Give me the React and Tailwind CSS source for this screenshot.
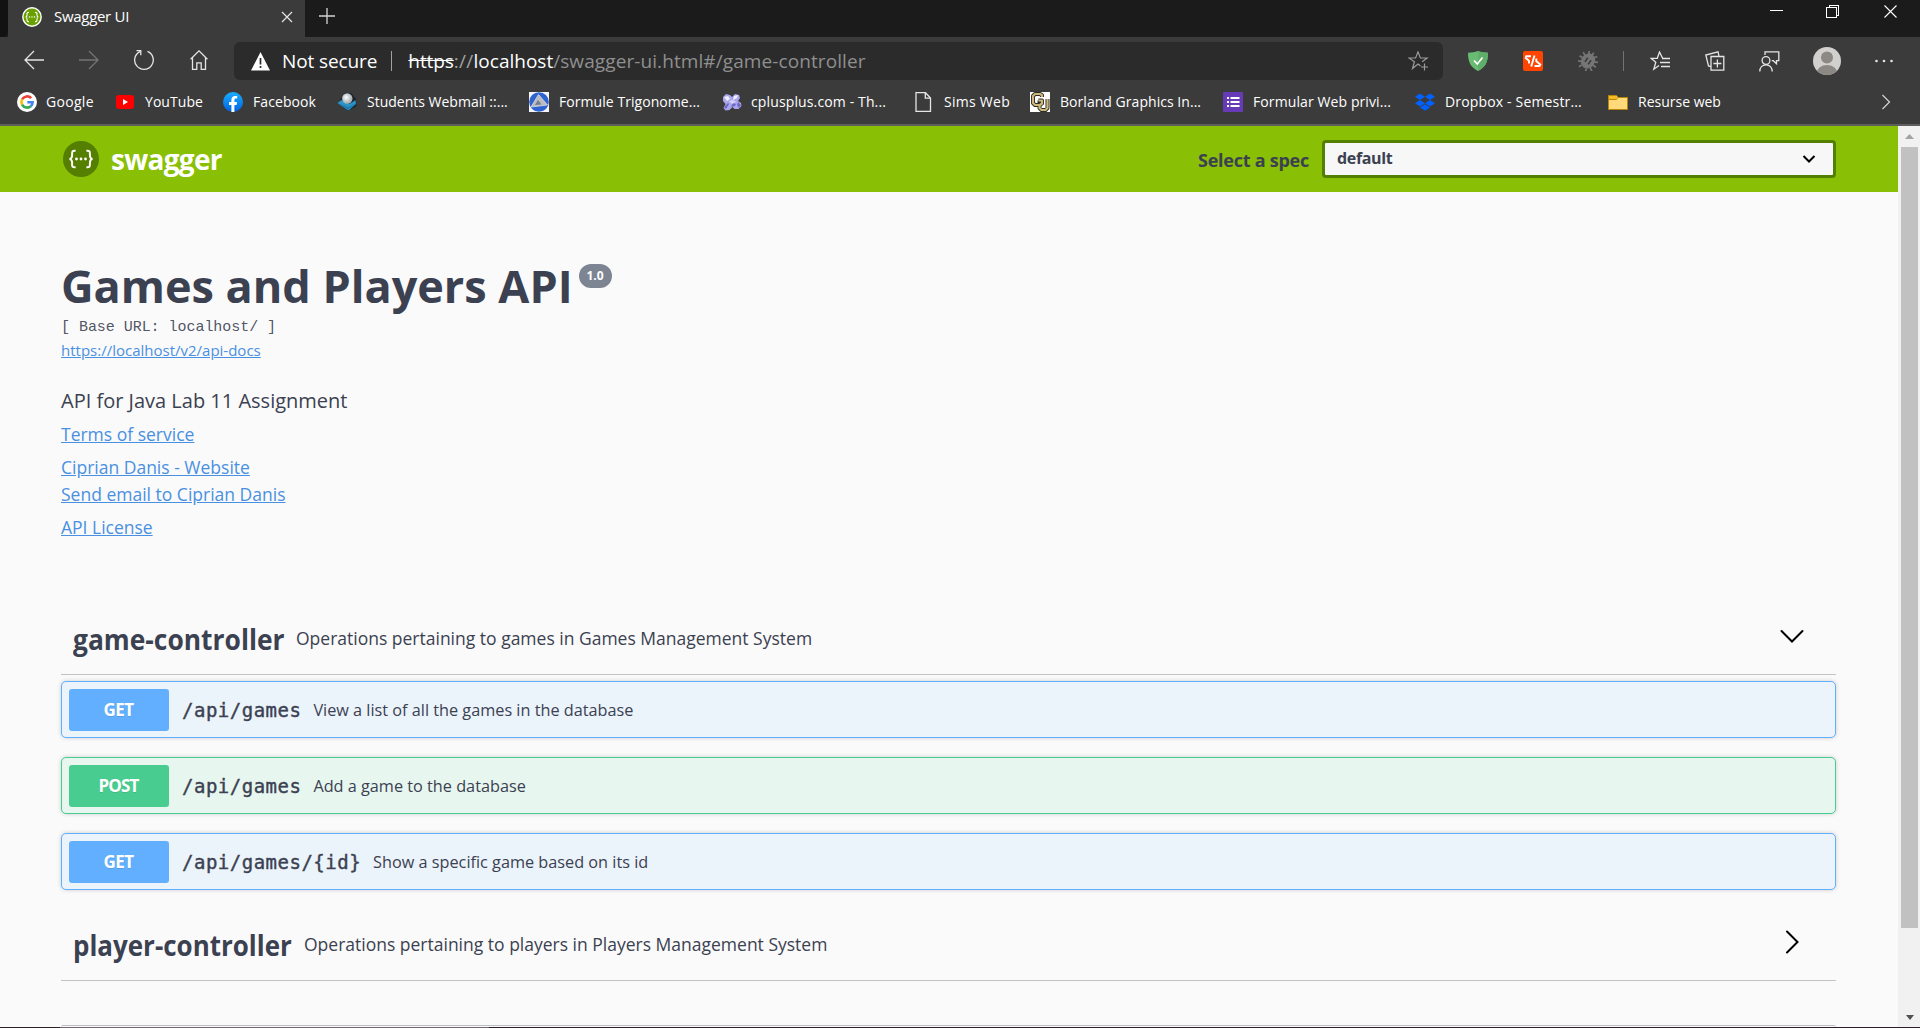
import React from "react";

const stroke = { fill: "none", stroke: "currentColor" };

function SwaggerMark({ size, ring }) {
  return (
    <svg width={size} height={size} viewBox="0 0 36 36" className="shrink-0">
      <circle cx="18" cy="18" r={ring ? 16.5 : 18} fill={ring ? "#6a9f00" : "#547f00"} stroke={ring ? "#fff" : "none"} strokeWidth="2.6" />
      <g fill="none" stroke="#fff" strokeWidth="2">
        <path d="M12.6 9.8c-3.4-.3-3.6.8-3.500 3.600.1 2.800-.2 4.300-2.600 4.600 2.400.3 2.700 1.800 2.600 4.600-.1 2.800.1 3.900 3.500 3.600" />
        <path d="M23.400 9.800c3.400-.3 3.600.8 3.500 3.600-.1 2.800.2 4.300 2.600 4.600-2.400.3-2.700 1.800-2.600 4.600.1 2.800-.1 3.900-3.500 3.600" />
      </g>
      <g fill="#fff">
        <circle cx="13.500" cy="18" r="1.400" />
        <circle cx="18" cy="18" r="1.400" />
        <circle cx="22.500" cy="18" r="1.400" />
      </g>
    </svg>
  );
}

const GoogleIcon = () => (
  <svg width="20" height="20" viewBox="0 0 20 20">
    <circle cx="10" cy="10" r="10" fill="#fff" />
    <g fill="none" strokeWidth="2.600">
      <path d="M14.200 6.200A5.600 5.600 0 0 0 5.100 7.400" stroke="#ea4335" />
      <path d="M5.100 7.400A5.700 5.700 0 0 0 5.100 12.700" stroke="#fbbc05" />
      <path d="M5.100 12.700A5.600 5.600 0 0 0 13.800 14.200" stroke="#34a853" />
      <path d="M13.800 14.200A5.600 5.600 0 0 0 15.600 10.200H10.300" stroke="#4285f4" />
    </g>
  </svg>
);
const YouTubeIcon = () => (
  <svg width="18" height="20" viewBox="0 0 18 20">
    <rect y="3" width="18" height="14" rx="3" fill="#f00" />
    <path d="M7 7l5 3-5 3z" fill="#fff" />
  </svg>
);
const FacebookIcon = () => (
  <svg width="20" height="20" viewBox="0 0 20 20">
    <defs>
      <linearGradient id="fb" x2="0" y2="1"><stop stopColor="#19afff" /><stop offset="1" stopColor="#0062e0" /></linearGradient>
    </defs>
    <circle cx="10" cy="10" r="10" fill="url(#fb)" />
    <path d="M8.400 20v-7H6v-3h2.400V7.800c0-2.500 1.500-3.900 3.700-3.900.9 0 1.700.1 2.100.2v2.500h-1.200c-1.200 0-1.600.7-1.600 1.500V10h2.700l-.5 3h-2.200v7z" fill="#fff" />
  </svg>
);
const WebmailIcon = () => (
  <svg width="20" height="20" viewBox="0 0 20 20">
    <defs>
      <radialGradient id="ball" cx=".4" cy=".4"><stop stopColor="#fff" /><stop offset="1" stopColor="#aab4b8" /></radialGradient>
    </defs>
    <path d="M3 8L8 1h6l5 6 .5 7-8.500 5z" fill="#1c2226" />
    <path d="M.5 11l4-3 8 4 6-4 .5 4-7.500 6.500z" fill="#2a93c8" />
    <path d="M.5 11l11 4 7.500-4-7.500 7.500z" fill="#1f7cb4" />
    <circle cx="10.300" cy="6.500" r="5.200" fill="url(#ball)" />
  </svg>
);
const FormuleIcon = () => (
  <svg width="20" height="20" viewBox="0 0 20 20">
    <rect width="20" height="20" fill="#f4f6fb" />
    <circle cx="10" cy="10" r="9.800" fill="#2f63d0" />
    <path d="M9.500 2.500l9 10.500L2 15z" fill="#b9bcc2" stroke="#d5d8de" strokeWidth=".8" />
    <path d="M9 8l3.500 4.500L6 13z" fill="#777c88" />
  </svg>
);
const CppIcon = () => (
  <svg width="20" height="20" viewBox="0 0 20 20">
    <path d="M1 5l3-3 4 1 2 2 3-3 4 1 1 3-2 3 3 2 .5 3-3 3-4 0-2-2-3 3-4 .5-2-2.500 2-4L1 9z" fill="#a9a6ee" />
    <path d="M2 5l4-1 2 3-3 2zM12 4l4-1-1 3-4 2z" fill="#f0efff" />
    <path d="M2 15l4-4 1 1-3 5zM9 15l2-4 3 1-1 2zM16 10l3 3-2 3-2-3z" fill="#6c68c4" />
    <path d="M7 9l4-1 3 2-4 2z" fill="#d4d2fb" />
  </svg>
);
const FileIcon = () => (
  <svg width="17" height="20" viewBox="0 0 17 20" className="mr-[2px] text-neutral-200">
    <path d="M1 .7h9.500L15.500 6v13.300H1zM10.300.7v5.500h5.200" {...stroke} strokeWidth="1.300" />
  </svg>
);
const BorlandIcon = () => (
  <svg width="20" height="20" viewBox="0 0 20 20">
    <rect width="20" height="20" fill="#fff" />
    <g fill="none" strokeLinejoin="round">
      <path d="M12 5V3.200L10 2H5L3 4v7l2 2h5l2-1.500V8.500H8.500" stroke="#2b2a26" strokeWidth="4" />
      <path d="M9.500 8.500v7.500l2 2h4l2-2V7" stroke="#2b2a26" strokeWidth="4" />
      <path d="M12 5V3.200L10 2H5L3 4v7l2 2h5l2-1.500V8.500H8.500M9.500 12v4l2 2h4l2-2V7" stroke="#cdb87c" strokeWidth="2.200" />
    </g>
  </svg>
);
const FormsIcon = () => (
  <svg width="20" height="20" viewBox="0 0 20 20">
    <rect width="20" height="20" rx="1" fill="#673ab7" />
    <path d="M4 5h2v2H4zM4 9h2v2H4zM4 13h2v2H4zM7.500 5h9v2h-9zM7.500 9h9v2h-9zM7.500 13h9v2h-9z" fill="#fff" />
  </svg>
);
const DropboxIcon = () => (
  <svg width="20" height="20" viewBox="0 0 20 20">
    <path d="M5 1.500l5 3.200-5 3.200-5-3.200zM15 1.500l5 3.200-5 3.200-5-3.200zM5 8l5 3.200-5 3.200-5-3.200zM15 8l5 3.200-5 3.200-5-3.200zM10 12.300l5 3.200-5 3.200-5-3.200z" fill="#0061ff" />
  </svg>
);
const FolderIcon = () => (
  <svg width="20" height="20" viewBox="0 0 20 20">
    <path d="M.5 3.500h8l1.500 2h9.500v12H.5z" fill="#ffd97a" stroke="#b8860b" />
    <path d="M1 4h7.200l1 1.800L8 7H1z" fill="#f5b921" />
    <path d="M.5 7.500h8l1.500-2" fill="none" stroke="#b8860b" />
  </svg>
);

const bookmarks = [
  ["Google", GoogleIcon, "w-[99px] gap-[9px] tracking-[0.3px]"],
  ["YouTube", YouTubeIcon, "w-[107px] gap-[11px] tracking-[0.06px]"],
  ["Facebook", FacebookIcon, "w-[114px] gap-[10px] tracking-[0.08px]"],
  ["Students Webmail ::...", WebmailIcon, "w-[192px] gap-[10px]"],
  ["Formule Trigonome...", FormuleIcon, "w-[193px] gap-[10px] tracking-[0.06px]"],
  ["cplusplus.com - Th...", CppIcon, "w-[193px] gap-[9px] tracking-[0.13px]"],
  ["Sims Web", FileIcon, "w-[115px] gap-[10px] tracking-[0.27px]"],
  ["Borland Graphics In...", BorlandIcon, "w-[193px] gap-[10px] tracking-[0.04px]"],
  ["Formular Web privi...", FormsIcon, "w-[192px] gap-[10px] tracking-[0.1px]"],
  ["Dropbox - Semestr...", DropboxIcon, "w-[193px] gap-[10px] tracking-[0.16px]"],
  ["Resurse web", FolderIcon, "w-[114px] gap-[10px]"],
];

function TabStrip() {
  return (
    <div className="flex h-[37px] bg-[#1b1b1b]">
      <div className="w-2 rounded-br-md bg-[#121212]" />
      <div className="flex h-[37px] w-[297px] items-start bg-[#3b3b3b] pl-[14px] pt-[7px]">
        <SwaggerMark size={20} ring />
        <span className="ml-3 -mt-px text-[15px] leading-5 tracking-[-0.3px] text-white">Swagger UI</span>
        <svg width="12" height="12" viewBox="0 0 12 12" className="ml-[152px] mt-1 text-neutral-200">
          <path d="M1 1l10 10M11 1L1 11" {...stroke} strokeWidth="1.200" />
        </svg>
      </div>
      <svg width="18" height="18" viewBox="0 0 18 18" className="ml-[13px] mt-[7px] text-neutral-300">
        <path d="M9 1v16M1 9h16" {...stroke} strokeWidth="1.300" />
      </svg>
      <div className="ml-auto flex pt-[4px] text-white">
        <svg width="14" height="14" viewBox="0 0 14 14" className="mr-[42px]">
          <path d="M0 6.500h13" {...stroke} />
        </svg>
        <svg width="14" height="14" viewBox="0 0 14 14" className="mr-[44px]" shapeRendering="crispEdges">
          <path d="M.5 3.500h10v10H.5zM3.500 3V1.500h9v10H11" {...stroke} />
        </svg>
        <svg width="14" height="14" viewBox="0 0 14 14" className="mr-[22px]">
          <path d="M.5 1.500l12 12M12.500 1.500l-12 12" {...stroke} strokeWidth="1.100" />
        </svg>
      </div>
    </div>
  );
}

function AddressBar() {
  return (
    <div className="flex h-[38px] w-[1209px] items-center rounded-md bg-[#2b2b2b] pl-[17px] pr-[14px] text-[19px] text-white">
      <svg width="19" height="19" viewBox="0 0 19 19">
        <path d="M9.500 0L19 18.500H0z" fill="#fff" />
        <path d="M9.500 6v6.500M9.500 14v2" stroke="#2b2b2b" strokeWidth="1.700" />
      </svg>
      <span className="ml-[12px] tracking-[-0.1px]">Not secure</span>
      <span className="ml-[14px] mr-[16px] h-5 w-px bg-neutral-400" />
      <span className="line-through tracking-[-0.1px]">https</span>
      <span className="text-neutral-400 tracking-[0.3px]">://</span>
      <span>localhost</span>
      <span className="text-[#8f8f8f] tracking-[0.09px]">/swagger-ui.html#/game-controller</span>
      <svg width="21" height="20" viewBox="0 0 21 20" className="ml-auto text-[#9b9b9b]">
        <path d="M12.500 15L10 13l-5.500 4.500 1.900-6.800L.9 7h6.700L10 .9 12.400 7h6.700l-5 3.800M16.500 12.500v7M13 16h7" {...stroke} strokeWidth="1.200" />
      </svg>
    </div>
  );
}

function Toolbar() {
  return (
    <div className="flex h-[48px] items-start bg-[#3b3b3b] pl-[24px] pt-[5px]">
      <div className="flex h-[38px] w-[210px] items-center text-neutral-200">
        <svg width="20" height="20" viewBox="0 0 20 20" className="mb-0.5 mr-[35px]">
          <path d="M10 1L1 10l9 9M1 10h19" {...stroke} strokeWidth="1.300" />
        </svg>
        <svg width="20" height="20" viewBox="0 0 20 20" className="mb-0.5 mr-[35px] text-[#757575]">
          <path d="M10 1l9 9-9 9M19 10H0" {...stroke} strokeWidth="1.300" />
        </svg>
        <svg width="20" height="20" viewBox="0 0 20 20" className="mb-0.5 mr-[36px]">
          <path d="M13.500 1.400A9.300 9.300 0 1 1 6 1.600M2.500.7h4.300v4.500" {...stroke} strokeWidth="1.300" />
        </svg>
        <svg width="18" height="20" viewBox="0 0 18 20" className="mb-0.5">
          <path d="M.6 9.200L9 .9l8.400 8.300M2.500 7.500v11.800h4.300v-6.500h4.400v6.500h4.300V7.500" {...stroke} strokeWidth="1.300" />
        </svg>
      </div>
      <AddressBar />
      <div className="flex h-[38px] items-center pl-[25px] text-neutral-200">
        <svg width="20" height="20" viewBox="0 0 20 20" className="mr-[35px]">
          <path d="M10 0c3 1.300 6.500 1.700 10 1.700C20 11 17.500 16 10 20 2.500 16 0 11 0 1.700 3.500 1.700 7 1.300 10 0z" fill="#68bc71" />
          <path d="M10 0c3 1.300 6.500 1.700 10 1.700C20 11 17.500 16 10 20z" fill="#5fae69" />
          <path d="M6 9.500l3.300 3.500L14.500 6.500" fill="none" stroke="#fff" strokeWidth="1.700" />
        </svg>
        <svg width="20" height="20" viewBox="0 0 20 20" className="mr-[35px]">
          <rect width="20" height="20" rx="2" fill="#ff4500" />
          <path d="M8 5.300H3.300L2.700 7l3.300 2.800v2.700M11.500 4.500l-3.300 11M13.300 7.500v2.700l4 3.300-.8 1.500H11.500" fill="none" stroke="#fff" strokeWidth="1.900" />
        </svg>
        <svg width="20" height="20" viewBox="0 0 20 20" className="text-[#757575]">
          <g transform="rotate(35 10 10)">
            <ellipse cx="10" cy="10" rx="6.800" ry="7.800" fill="currentColor" />
            <path d="M10 0v3M5 1l2 3M15 1l-2 3M1 5.500l4 2M0 10.500h5M1 16l4-2M19 5.500l-4 2M20 10.500h-5M19 16l-4-2M7 17l-1 3M13 17l1 3" {...stroke} strokeWidth="1.800" />
            <path d="M8 7.500v5M12 7.500v5" stroke="#3b3b3b" strokeWidth="1.600" />
          </g>
        </svg>
        <span className="ml-[25px] mr-[26px] h-5 w-px bg-neutral-500" />
        <svg width="20" height="20" viewBox="0 0 20 20" className="mr-[35px]">
          <path d="M12.500 7L9.500 1 7.300 7.300H1l4.800 4-2 6.900L9 14.500M12 7.500h8M10 11.500h10M11 15.500h9" {...stroke} strokeWidth="1.300" />
        </svg>
        <svg width="20" height="20" viewBox="0 0 20 20" className="mr-[34px]">
          <path d="M6 5.500h12.800v13.700H6zM12.400 8.500v8M8.400 12.500h8M5.500 15.500L3.500 15 .8 4 13 .8l1 4.400" {...stroke} strokeWidth="1.300" />
        </svg>
        <svg width="21" height="21" viewBox="0 0 21 21" className="mr-[33px]">
          <circle cx="7" cy="9.500" r="3.900" {...stroke} strokeWidth="1.300" />
          <path d="M.8 20.500c0-4 2.500-6.700 6.200-6.700s6.200 2.700 6.200 6.700M6 4V.9h13.800v8.800h-2.300v3l-3.200-3h-1.500" {...stroke} strokeWidth="1.300" />
        </svg>
        <svg width="28" height="28" viewBox="0 0 28 28" className="mr-[34px]">
          <defs><clipPath id="av"><circle cx="14" cy="14" r="14" /></clipPath></defs>
          <g clipPath="url(#av)">
            <rect width="28" height="28" fill="#d2d0ce" />
            <circle cx="14" cy="10.500" r="6" fill="#8c8884" />
            <ellipse cx="14" cy="26.500" rx="10.500" ry="8.500" fill="#8c8884" />
          </g>
        </svg>
        <svg width="18" height="4" viewBox="0 0 18 4" fill="currentColor">
          <circle cx="1.500" cy="2" r="1.300" />
          <circle cx="9" cy="2" r="1.300" />
          <circle cx="16.500" cy="2" r="1.300" />
        </svg>
      </div>
    </div>
  );
}

function Bookmarks() {
  return (
    <div className="flex h-[41px] items-start border-b-2 border-[#5e5e5e] bg-[#3b3b3b] pl-[17px] pt-[7px] text-sm text-white">
      {bookmarks.map(([name, Icon, cls]) => (
        <div key={name} className={"flex h-5 shrink-0 items-center whitespace-nowrap " + cls}>
          <Icon />
          <span>{name}</span>
        </div>
      ))}
      <svg width="10" height="16" viewBox="0 0 10 16" className="ml-auto mr-[29px] mt-[2px] text-neutral-300">
        <path d="M1.500 1l7 7-7 7" {...stroke} strokeWidth="1.200" />
      </svg>
    </div>
  );
}

function Topbar() {
  return (
    <header className="flex h-[66px] items-center bg-[#89bf04] pl-[63px] pr-[62px]">
      <SwaggerMark size={36} />
      <span className="ml-[12px] text-[28px] font-bold leading-9 tracking-[-0.7px] text-white">swagger</span>
      <span className="ml-auto mr-[13px] mt-0.5 text-[18px] font-bold tracking-[-0.25px]">Select a spec</span>
      <div className="flex h-[38px] w-[514px] items-center justify-between rounded border-[3px] border-[#547f00] bg-[#f7f7f7] pl-[12px] pr-[17px]">
        <span className="pb-0.5 text-[16px] font-bold tracking-[-0.35px]">default</span>
        <svg width="14" height="8" viewBox="0 0 14 8" className="text-black">
          <path d="M1.500 1l5.500 5.500L12.500 1" {...stroke} strokeWidth="2" />
        </svg>
      </div>
    </header>
  );
}

const link = "text-[#4990e2] underline";

function Info() {
  return (
    <section className="flex flex-col items-start">
      <div className="mt-[64px] flex h-[60px] items-start">
        <h1 className="text-[45px] font-bold leading-[60px]">Games and Players API</h1>
        <span className="ml-[6px] mt-[8px] flex h-6 w-[33px] items-center justify-center rounded-full bg-[#7d8492] text-xs font-bold text-white">1.0</span>
      </div>
      <span className="mt-0.5 font-['Liberation_Mono',monospace] text-[15px] leading-5 tracking-[-0.04px] text-[#3b4151]/90">[ Base URL: localhost/ ]</span>
      <a className={"mt-0.5 text-[15px] leading-5 " + link}>https://localhost/v2/api-docs</a>
      <p className="mt-[27px] text-[20px] leading-7">API for Java Lab 11 Assignment</p>
      <a className={"mt-[6px] text-[17.500px] leading-[26px] " + link}>Terms of service</a>
      <a className={"mt-[7px] text-[17.500px] leading-[26px] " + link}>Ciprian Danis - Website</a>
      <a className={"mt-[1px] text-[17.500px] leading-[26px] " + link}>Send email to Ciprian Danis</a>
      <a className={"mt-[7px] text-[17.500px] leading-[26px] " + link}>API License</a>
    </section>
  );
}

function TagHeader({ name, text, open, className, nameClass }) {
  return (
    <div className={"flex h-[68px] items-center border-b border-[#3b4151]/30 pl-[12px] pr-[31px] " + className}>
      <h2 className={"mb-[3px] origin-left whitespace-nowrap text-[29px] font-bold leading-10 " + nameClass}>{name}</h2>
      <span className="ml-[11px] pb-[5px] text-[17.500px]">{text}</span>
      <svg width="26" height="26" viewBox="0 0 26 26" className="mb-[9px] ml-auto text-black">
        <path d={open ? "M2.500 8L13 18.500 23.500 8" : "M8 2.500L18.500 13 8 23.500"} {...stroke} strokeWidth="2" strokeLinecap="round" />
      </svg>
    </div>
  );
}

const tones = {
  GET: ["border-[#61affe] bg-[#ebf3fb]", "bg-[#61affe] tracking-[-0.55px]"],
  POST: ["border-[#49cc90] bg-[#e8f6f0]", "bg-[#49cc90] tracking-[-0.8px]"],
};

function Operation({ method, path, text }) {
  const [box, badge] = tones[method];
  return (
    <div className={"flex h-[57px] items-center rounded-[5px] border pl-[7px] shadow-[0_0_4px_rgba(0,0,0,0.19)] " + box}>
      <span className={"flex h-[42px] w-[100px] items-center justify-center rounded-[3px] pr-px text-[17px] font-bold text-white [text-shadow:0_1px_0_rgba(0,0,0,0.1)] " + badge}>{method}</span>
      <span className="ml-[13px] pt-0.5 font-['DejaVu_Sans_Mono',monospace] text-[19px] tracking-[0.5px] [-webkit-text-stroke:0.4px]">{path}</span>
      <span className="ml-[12px] pt-px text-[16.250px]">{text}</span>
    </div>
  );
}

function Scrollbar() {
  return (
    <div className="flex w-[22px] shrink-0 flex-col items-center bg-[#f1f1f1] pl-px">
      <div className="flex h-[21px] items-center">
        <svg width="9" height="5" viewBox="0 0 9 5"><path d="M4.500 0L9 5H0z" fill="#a3a3a3" /></svg>
      </div>
      <div className="h-[781px] w-[17px] bg-[#c1c1c1]" />
      <svg width="8" height="5" viewBox="0 0 8 5" className="mb-[7px] mt-auto"><path d="M4 5L0 0h8z" fill="#505050" /></svg>
    </div>
  );
}

export default function App() {
  return (
    <div className="flex h-[1028px] w-[1920px] flex-col overflow-hidden bg-[#fafafa] font-['Open_Sans',sans-serif] text-[#3b4151]">
      <TabStrip />
      <Toolbar />
      <Bookmarks />
      <div className="flex min-h-0 flex-1">
        <div className="flex min-w-0 flex-1 flex-col">
          <Topbar />
          <main className="flex flex-1 flex-col pl-[61px] pr-[62px]">
            <Info />
            <TagHeader className="mt-[67px]" nameClass="w-[212px] scale-x-[.91]" name="game-controller" text="Operations pertaining to games in Games Management System" open />
            <div className="mt-[6px] flex flex-col gap-[19px]">
              <Operation method="GET" path="/api/games" text="View a list of all the games in the database" />
              <Operation method="POST" path="/api/games" text="Add a game to the database" />
              <Operation method="GET" path="/api/games/{id}" text="Show a specific game based on its id" />
            </div>
            <TagHeader className="mt-[23px]" nameClass="w-[220px] scale-x-[.895]" name="player-controller" text="Operations pertaining to players in Players Management System" />
            <div className="mt-auto h-0.5 rounded-t border-t border-[#bcbec3]" />
          </main>
        </div>
        <Scrollbar />
      </div>
      <div className="flex h-px shrink-0">
        <div className="w-[60px] bg-[#2a2227]" />
        <div className="w-[429px] bg-[#6f6670]" />
        <div className="flex-1 bg-[#2b1f2a]" />
      </div>
    </div>
  );
}
